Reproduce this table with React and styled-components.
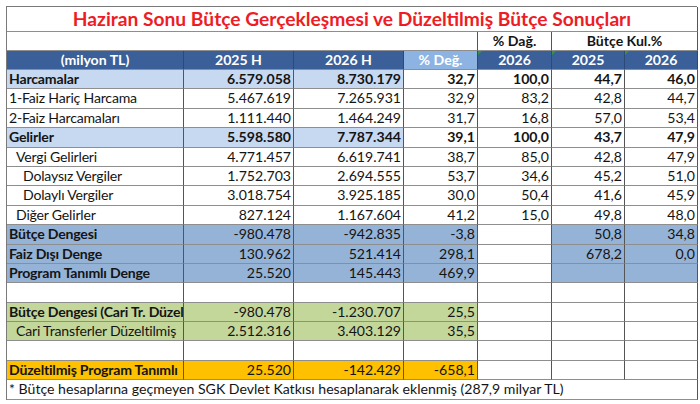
import React from "react";
import styled, { createGlobalStyle } from "styled-components";

const Global = createGlobalStyle`
  html, body { margin: 0; padding: 0; background: #fff; }
  body { font-family: Lato, "Open Sans", sans-serif; color: #111; }
`;

const COLS = "177px 110px 110px 74px 74px 73px 73px";

const Page = styled.div`
  padding: 6px 0 0 6px;
`;

const Sheet = styled.div`
  display: grid;
  grid-template-columns: ${COLS};
  width: 691px;
  border-top: 1px solid #7a7a7a;
  border-left: 1px solid #7a7a7a;
  box-sizing: border-box;
`;

const BG = {
  white: "#ffffff",
  head: "#3a5f99",
  headLight: "#8db3e2",
  light: "#c6d9f0",
  mid: "#95b3d7",
  green: "#c4d79b",
  orange: "#ffc000",
};

const Cell = styled.div`
  position: relative;
  box-sizing: border-box;
  height: ${(p) => p.$h || 19.4}px;
  grid-column: span ${(p) => p.$span || 1};
  background: ${(p) => BG[p.$bg || "white"]};
  border-right: 1px solid ${(p) => (p.$dark ? "#2c4a78" : "#555")};
  border-bottom: 1px solid #8e8e8e;
  font-size: 14.1px;
  line-height: ${(p) => (p.$h || 19.4) - 1}px;
  font-weight: ${(p) => (p.$bold ? 700 : 400)};
  text-align: ${(p) => p.$align || "right"};
  padding: 0 2px 0 ${(p) => 2 + (p.$indent || 0) * 7}px;
  white-space: nowrap;
  overflow: hidden;
  color: ${(p) => (p.$light ? "#fff" : "#141414")};
`;

const Label = styled(Cell)`
  text-align: left;
  letter-spacing: -0.2px;
`;

const Title = styled(Cell)`
  font-size: 19.2px;
  font-weight: 700;
  color: #ee1c25;
  text-align: center;
`;

const Note = styled(Cell)`
  text-align: left;
`;

const Flag = styled.span`
  position: absolute;
  top: 0;
  left: 0;
  width: 0;
  height: 0;
  border-top: 4px solid #2e9a3c;
  border-right: 4px solid transparent;
`;

const rows = [
  { label: "Harcamalar", kind: "light", bold: true, v: ["6.579.058", "8.730.179", "32,7", "100,0", "44,7", "46,0"] },
  { label: "1-Faiz Hariç Harcama", v: ["5.467.619", "7.265.931", "32,9", "83,2", "42,8", "44,7"] },
  { label: "2-Faiz Harcamaları", v: ["1.111.440", "1.464.249", "31,7", "16,8", "57,0", "53,4"] },
  { label: "Gelirler", kind: "light", bold: true, v: ["5.598.580", "7.787.344", "39,1", "100,0", "43,7", "47,9"] },
  { label: "Vergi Gelirleri", indent: 1, v: ["4.771.457", "6.619.741", "38,7", "85,0", "42,8", "47,9"] },
  { label: "Dolaysız Vergiler", indent: 2, v: ["1.752.703", "2.694.555", "53,7", "34,6", "45,2", "51,0"] },
  { label: "Dolaylı Vergiler", indent: 2, v: ["3.018.754", "3.925.185", "30,0", "50,4", "41,6", "45,9"] },
  { label: "Diğer Gelirler", indent: 1, v: ["827.124", "1.167.604", "41,2", "15,0", "49,8", "48,0"] },
  { label: "Bütçe Dengesi", kind: "mid", labelBold: true, v: ["-980.478", "-942.835", "-3,8", "", "50,8", "34,8"] },
  { label: "Faiz Dışı Denge", kind: "mid", labelBold: true, v: ["130.962", "521.414", "298,1", "", "678,2", "0,0"] },
  { label: "Program Tanımlı Denge", kind: "mid", labelBold: true, v: ["25.520", "145.443", "469,9", "", "", ""] },
  { label: "", v: ["", "", "", "", "", ""] },
  { label: "Bütçe Dengesi (Cari Tr. Düzel", kind: "green", labelBold: true, v: ["-980.478", "-1.230.707", "25,5", "", "", ""] },
  { label: "Cari Transferler Düzeltilmiş", indent: 1, kind: "green", v: ["2.512.316", "3.403.129", "35,5", "", "", ""] },
  { label: "", v: ["", "", "", "", "", ""] },
  { label: "Düzeltilmiş Program Tanımlı", kind: "orange", labelBold: true, v: ["25.520", "-142.429", "-658,1", "", "", ""] },
];

function bgFor(kind, col) {
  if (kind === "light") return col <= 2 ? "light" : "white";
  if (kind === "mid") return col === 4 ? "white" : "mid";
  if (kind === "green") return col <= 3 ? "green" : "white";
  if (kind === "orange") return col <= 3 ? "orange" : "white";
  return "white";
}

export default function App() {
  return (
    <Page>
      <Global />
      <Sheet>
        <Title $span={7} $h={25}>
          Haziran Sonu Bütçe Gerçekleşmesi ve Düzeltilmiş Bütçe Sonuçları
        </Title>

        <Cell $span={4} $h={19} />
        <Cell $h={19} $align="center" $bold>% Dağ.</Cell>
        <Cell $span={2} $h={19} $align="center" $bold>Bütçe Kul.%</Cell>

        <Cell $bg="head" $dark $light $bold $align="center" $h={19}>(milyon TL)</Cell>
        <Cell $bg="head" $dark $light $bold $align="center" $h={19}>2025 H</Cell>
        <Cell $bg="head" $dark $light $bold $align="center" $h={19}>2026 H</Cell>
        <Cell $bg="headLight" $dark $light $bold $align="center" $h={19}>% Değ.</Cell>
        <Cell $bg="head" $dark $light $bold $align="center" $h={19}><Flag />2026</Cell>
        <Cell $bg="head" $dark $light $bold $align="center" $h={19}><Flag />2025</Cell>
        <Cell $bg="head" $dark $light $bold $align="center" $h={19}><Flag />2026</Cell>

        {rows.map((r, i) => (
          <React.Fragment key={i}>
            <Label
              $bg={bgFor(r.kind, 0)}
              $indent={r.indent}
              $bold={r.bold || r.labelBold}
            >
              {r.label}
            </Label>
            {r.v.map((val, j) => (
              <Cell key={j} $bg={bgFor(r.kind, j + 1)} $bold={r.bold}>
                {val}
              </Cell>
            ))}
          </React.Fragment>
        ))}

        <Note $span={7}>
          * Bütçe hesaplarına geçmeyen SGK Devlet Katkısı hesaplanarak eklenmiş (287,9 milyar TL)
        </Note>
      </Sheet>
    </Page>
  );
}
